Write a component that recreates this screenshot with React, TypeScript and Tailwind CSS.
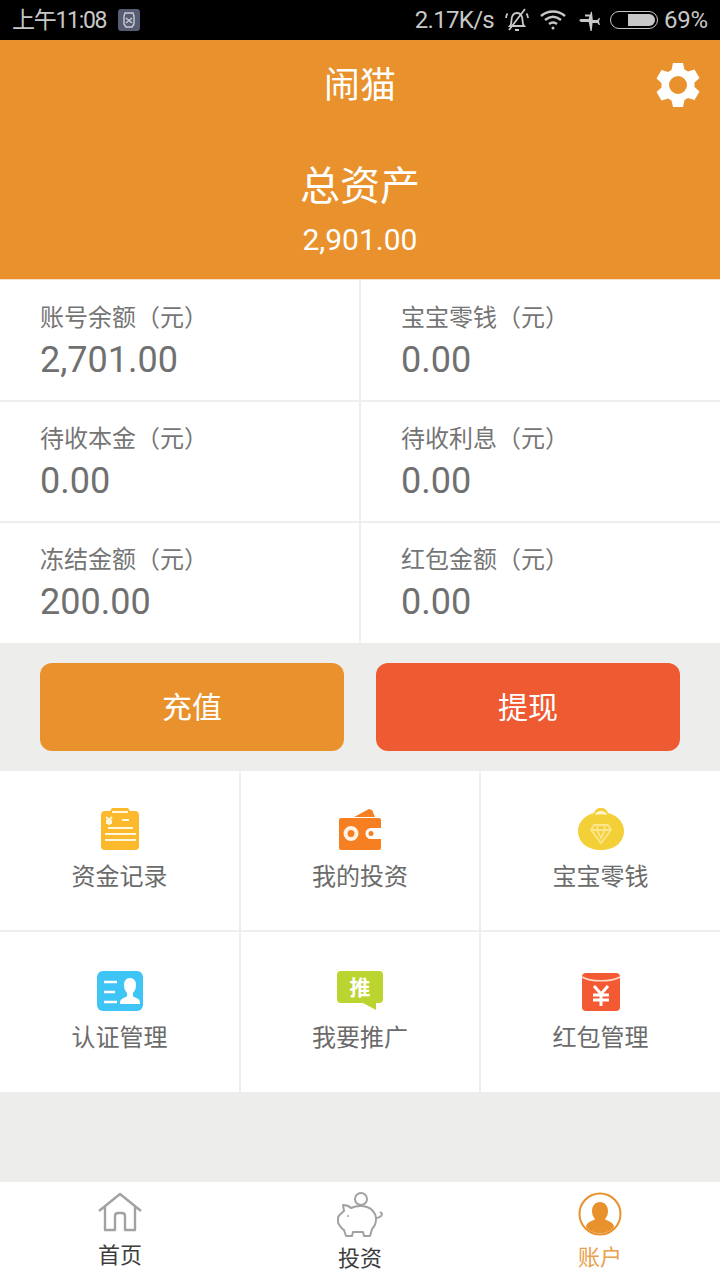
import type { ReactNode } from "react";

const font = "font-['Roboto','Noto_Sans_CJK_SC',sans-serif]";

const balances = [
  { label: "账号余额（元）", value: "2,701.00" },
  { label: "宝宝零钱（元）", value: "0.00" },
  { label: "待收本金（元）", value: "0.00" },
  { label: "待收利息（元）", value: "0.00" },
  { label: "冻结金额（元）", value: "200.00" },
  { label: "红包金额（元）", value: "0.00" },
];

function StatusBar() {
  return (
    <div className="flex h-10 items-center justify-between bg-black pl-3 pr-3 text-[24px] leading-none text-[#c8c8c8]">
      <div className="flex items-center gap-[12px]">
        <span className="text-[23px] tracking-[-1.3px]">上午11:08</span>
        <svg width="22" height="22" viewBox="0 0 22 22">
          <rect width="22" height="22" rx="3" fill="#565c72" />
          <path d="M7 4h8l1 3v8l-2 3H8l-2-3V7z" fill="none" stroke="#c9ccd6" strokeWidth="1.4" />
          <path d="M8 9l6 5M14 9l-6 5" stroke="#c9ccd6" strokeWidth="1.4" />
        </svg>
      </div>
      <div className="flex items-center">
        <span className="mr-[11px] tracking-[-0.7px]">2.17K/s</span>
        <svg width="24" height="26" viewBox="0 0 24 26" fill="none" stroke="#c8c8c8" strokeWidth="1.8" className="mr-[11px]">
          <path d="M5 19c2-2 1-6 2-9 1-3 3-4 5-4s4 1 5 4c1 3 0 7 2 9z" />
          <path d="M10 23h4M4 23L20 2M1 11c0-2 .5-3 1.500-4.500M23 11c0-2-.5-3-1.500-4.500" />
        </svg>
        <svg width="26" height="22" viewBox="0 0 26 22" fill="none" stroke="#c8c8c8" strokeWidth="2.4" className="mr-[12px]">
          <path d="M1 7c7-6 17-6 24 0M5 11c5-4 11-4 16 0M9 15c2.500-2 5.500-2 8 0" />
          <circle cx="13" cy="19" r="1.500" fill="#c8c8c8" stroke="none" />
        </svg>
        <svg width="24" height="24" viewBox="0 0 24 24" fill="#c8c8c8" className="mr-[8px] -rotate-90">
          <path d="M1 12.500l9-1.800V4.500c0-3 1.500-3 2-3s1 .5 1 3v6.200l2.500.6V7h2v5.200l2 .5c1.500.4 1.500 1.100 0 1.300l-4.500.5-3 .3v4.500l2 1.700v1l-3.500-1-3.500 1v-1l2-1.700v-4.700l-8-.9z" />
        </svg>
        <div className="mr-[6px] flex h-[18px] w-[48px] items-center justify-end rounded-full border border-[#c8c8c8] p-[2px]">
          <div className="h-full w-[64%] rounded-r-full bg-[#c8c8c8]" />
        </div>
        <span className="tracking-[-0.2px]">69%</span>
      </div>
    </div>
  );
}

function Gear() {
  return (
    <svg width="44" height="46" viewBox="0 0 44 46" className="absolute right-[20px] top-[22px]">
      <path
        fillRule="evenodd"
        fill="#fff"
        d="M17 1h10l1.500 6.500 3.500 2 6.500-2 5 8.500-5 4.500v4.500l5 4.500-5 8.500-6.500-2-3.500 2L27 45H17l-1.500-6.500-3.500-2-6.500 2-5-8.500 5-4.500v-4.500l-5-4.500 5-8.500 6.500 2 3.500-2zM22 14a9 9 0 1 0 0 18 9 9 0 0 0 0-18z"
      />
    </svg>
  );
}

function Header() {
  return (
    <header className="relative flex h-[239px] flex-col items-center bg-[#e9922d] text-white">
      <div className="mt-[22px] text-[36px] leading-[48px]">闹猫</div>
      <Gear />
      <div className="mt-[49px] text-[40px] leading-[56px]">总资产</div>
      <div className="mt-[5px] text-[30px] leading-[40px]">2,901.00</div>
    </header>
  );
}

function BalanceGrid() {
  return (
    <section className="grid grid-cols-2 border-t border-[#f5dfc8] bg-white">
      {balances.map((item, i) => (
        <div
          key={item.label}
          className={`${i < 2 ? "h-[122px] pt-[21px]" : i < 4 ? "h-[121px] pt-[20px]" : "h-[120px] pt-[20px]"} ${i % 2 === 0 ? "w-[361px] border-r-2 border-[#eeeeee] pl-[40px]" : "pl-[41px]"} ${i < 4 ? "border-b-2 border-b-[#eeeeee]" : ""}`}
        >
          <div className="text-[24px] leading-[34px] text-[#757575]">{item.label}</div>
          <div className="mt-[4px] text-[36px] leading-[42px] text-[#707070]">{item.value}</div>
        </div>
      ))}
    </section>
  );
}

function ClipboardIcon() {
  return (
    <svg width="38" height="42" viewBox="0 0 38 42">
      <path d="M11 0h16l2 3h5a4 4 0 0 1 4 4v31a4 4 0 0 1-4 4H4a4 4 0 0 1-4-4V7a4 4 0 0 1 4-4h5z" fill="#fdb92c" />
      <path d="M11 4h16M5 9l3 3 3-3M8 12v5M5 13h6M5 15h6M21 12h7M7 20h25M4 26h31M4 32h31" stroke="#fff6de" strokeWidth="2" fill="none" />
    </svg>
  );
}

function WalletIcon() {
  return (
    <svg width="44" height="42" viewBox="0 0 44 42">
      <path d="M16 9L31 1l3 1 3 7z" fill="#f67f22" />
      <path d="M3 10h38a2 2 0 0 1 2 2v8H33a5.500 5.500 0 0 0 0 11h10v9a2 2 0 0 1-2 2H3a2 2 0 0 1-2-2V12a2 2 0 0 1 2-2z" fill="#f67f22" />
      <circle cx="13" cy="25.500" r="5.500" fill="none" stroke="#fff3e6" strokeWidth="4" />
      <circle cx="33" cy="25.500" r="2.500" fill="#f67f22" />
    </svg>
  );
}

function PouchIcon() {
  return (
    <svg width="46" height="42" viewBox="0 0 46 42">
      <path d="M23 0c4 0 6 2 7 5 9 2 16 9 16 18 0 11-9 19-23 19S0 34 0 23C0 14 7 7 16 5c1-3 3-5 7-5z" fill="#f4d038" />
      <path d="M17 7c1-3 3-4 6-4s5 1 6 4c-4-1-8-1-12 0z" fill="#fff6cc" />
      <path d="M16 17h14l3 5-10 13-10-13zM14 22h18M19 22l4 8 4-8M20 17l-1 5M26 17l1 5" fill="none" stroke="#fbe68c" strokeWidth="1.800" />
    </svg>
  );
}

function IdCardIcon() {
  return (
    <svg width="46" height="40" viewBox="0 0 46 40">
      <rect width="46" height="40" rx="6" fill="#3fc5f5" />
      <path d="M7 11h13M7 21h11M7 31h13" stroke="#fff" strokeWidth="2.500" />
      <path d="M33 7c4 0 6 3 6 7 0 3-1 6-3 8v3c2 2 7 2 7 7v1H23v-1c0-5 5-5 7-7v-3c-2-2-3-5-3-8 0-4 2-7 6-7z" fill="#fff" />
    </svg>
  );
}

function PromoteIcon() {
  return (
    <svg width="46" height="40" viewBox="0 0 46 40">
      <path d="M4 0h38a4 4 0 0 1 4 4v24a4 4 0 0 1-4 4h-3v7l-13-7H4a4 4 0 0 1-4-4V4a4 4 0 0 1 4-4z" fill="#bcd42f" />
      <text x="23" y="24" textAnchor="middle" fontSize="21" fontWeight="700" fill="#fff" fontFamily="'Noto Sans CJK SC',sans-serif">推</text>
    </svg>
  );
}

function RedPacketIcon() {
  return (
    <svg width="38" height="38" viewBox="0 0 38 38">
      <rect width="38" height="38" rx="4" fill="#f35a33" />
      <path d="M0 4c8 5 30 5 38 0" fill="none" stroke="#ffd9cc" strokeWidth="1.500" />
      <path d="M12 13l7 8 7-8M11 22h16M11 27h16M19 21v12" fill="none" stroke="#fff" strokeWidth="3" />
    </svg>
  );
}

const menu: { label: string; icon: ReactNode }[] = [
  { label: "资金记录", icon: <ClipboardIcon /> },
  { label: "我的投资", icon: <WalletIcon /> },
  { label: "宝宝零钱", icon: <PouchIcon /> },
  { label: "认证管理", icon: <IdCardIcon /> },
  { label: "我要推广", icon: <PromoteIcon /> },
  { label: "红包管理", icon: <RedPacketIcon /> },
];

function MenuGrid() {
  return (
    <section className="grid grid-cols-[241px_240px_239px] bg-white">
      {menu.map((item, i) => (
        <div
          key={item.label}
          className={`flex flex-col items-center ${i < 3 ? "h-[161px] border-b-2" : "h-[160px]"} border-[#eeeeee] ${i % 3 !== 2 ? "border-r-2" : ""}`}
        >
          <div className="mt-[37px] flex h-[42px] items-end">{item.icon}</div>
          <div className="mt-[10px] text-[24px] leading-[34px] text-[#6b6b6b]">{item.label}</div>
        </div>
      ))}
    </section>
  );
}

function BottomNav() {
  return (
    <nav className="grid h-[98px] grid-cols-3 bg-white">
      <div className="flex flex-col items-center">
        <svg width="44" height="40" viewBox="0 0 44 40" fill="none" stroke="#a2a2a2" strokeWidth="2.400" className="mt-[10px]">
          <path d="M1 19L22 2l21 17M7 15v23h10V24c0-2 1-3 3-3h4c2 0 3 1 3 3v14h10V15" strokeLinejoin="round" />
        </svg>
        <div className="mt-[7px] text-[22px] leading-[34px] text-[#3d3d3d]">首页</div>
      </div>
      <div className="flex flex-col items-center">
        <svg width="46" height="46" viewBox="0 0 46 46" fill="none" stroke="#a2a2a2" strokeWidth="2" className="mt-[10px]">
          <circle cx="24" cy="7" r="6" />
          <path d="M7 19l-1-6c3 0 6 1 8 3 6-3 16-3 21 2 3 3 4 6 4 9 0 4-1 7-4 10l-2 7h-6l-1-4h-10l-1 4H9l-2-6c-2-1-3-3-4-4-1-2-2-2-2-4v-4c0-3 3-4 6-7z" strokeLinejoin="round" />
          <path d="M39 26c3 0 6-2 6-4 0-1-1-2-2-1" />
          <circle cx="11" cy="24" r="1" fill="#a2a2a2" stroke="none" />
        </svg>
        <div className="mt-[4px] text-[22px] leading-[34px] text-[#3d3d3d]">投资</div>
      </div>
      <div className="flex flex-col items-center">
        <svg width="44" height="44" viewBox="0 0 44 44" className="mt-[10px]">
          <circle cx="22" cy="22" r="20.500" fill="#fff" stroke="#e9922d" strokeWidth="2" />
          <path d="M22 10c5 0 8 4 8 9 0 3-1 6-3 8 2 2 9 3 9 8-3 4-8 6-14 6S11 39 8 35c0-5 7-6 9-8-2-2-3-5-3-8 0-5 3-9 8-9z" fill="#e9922d" />
        </svg>
        <div className="mt-[5px] text-[22px] leading-[34px] text-[#e9a04a]">账户</div>
      </div>
    </nav>
  );
}

export default function App() {
  return (
    <main className={`flex h-[1280px] w-[720px] flex-col overflow-hidden bg-[#ededeb] ${font}`}>
      <StatusBar />
      <Header />
      <BalanceGrid />
      <div className="flex gap-8 px-10 py-5">
        <button className="h-[88px] flex-1 rounded-[12px] bg-[#e9922d] text-[30px] text-white">充值</button>
        <button className="h-[88px] flex-1 rounded-[12px] bg-[#ee5b32] text-[30px] text-white">提现</button>
      </div>
      <MenuGrid />
      <div className="flex-1" />
      <BottomNav />
    </main>
  );
}
